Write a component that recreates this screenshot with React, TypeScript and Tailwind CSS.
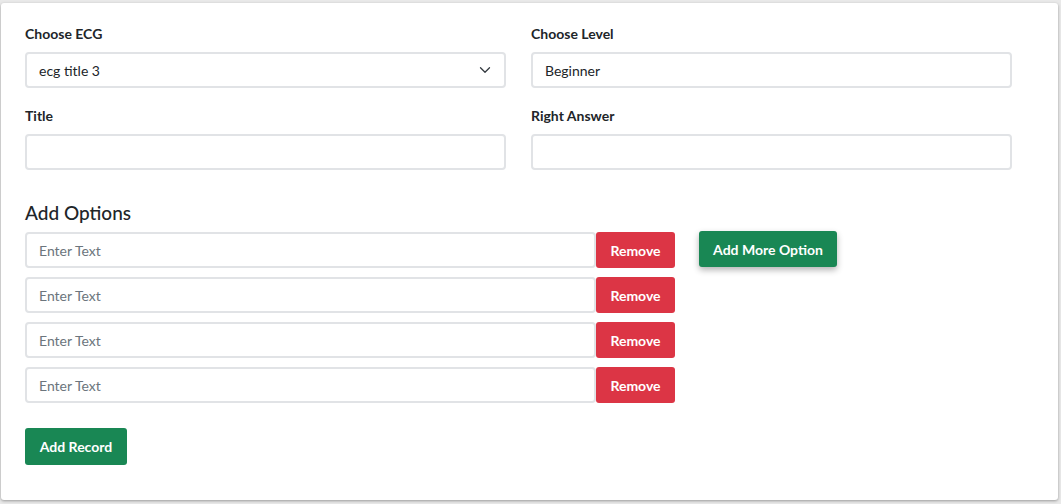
import { ChevronDown } from "lucide-react";

const inputCls =
  "h-9 rounded-[4px] border-2 border-[#e1e3e6] bg-white px-[12px] text-[14px] text-[#212529] outline-none placeholder:text-[#6c757d]";

function Field({ label, children }: { label: string; children: React.ReactNode }) {
  return (
    <div className="w-[481px]">
      <label className="mb-[10px] block text-[14px] font-bold leading-[17px] text-[#212529]">
        {label}
      </label>
      {children}
    </div>
  );
}

export default function App() {
  const options = [0, 1, 2, 3];

  return (
    <div
      className="min-h-[504px] bg-[#e9e9e9] pl-[1px] pr-[3px] pt-[3px] pb-[4px]"
      style={{ fontFamily: "Lato, 'Open Sans', sans-serif" }}
    >
      <div className="h-[497px] rounded-[3px] bg-white pl-[24px] pt-[22px] shadow-[0_1px_3px_rgba(0,0,0,0.35)]">
        {/* Top fields */}
        <div className="grid w-[987px] grid-cols-2 gap-x-[25px] gap-y-[19px]">
          <Field label="Choose ECG">
            <div className="relative">
              <select
                defaultValue="3"
                className={inputCls + " w-full appearance-none"}
              >
                <option value="1">ecg title 1</option>
                <option value="2">ecg title 2</option>
                <option value="3">ecg title 3</option>
              </select>
              <ChevronDown
                className="pointer-events-none absolute right-[12px] top-[9px] h-[18px] w-[18px] text-[#343a40]"
                strokeWidth={1.7}
              />
            </div>
          </Field>
          <Field label="Choose Level">
            <input className={inputCls + " w-full"} defaultValue="Beginner" />
          </Field>
          <Field label="Title">
            <input className={inputCls + " w-full"} />
          </Field>
          <Field label="Right Answer">
            <input className={inputCls + " w-full"} />
          </Field>
        </div>

        {/* Options */}
        <h2 className="mt-[32px] text-[19px] font-medium leading-[22px] text-[#212529]">
          Add Options
        </h2>
        <div className="mt-[8px] flex items-start">
          <div className="flex flex-col gap-[9px]">
            {options.map((i) => (
              <div key={i} className="flex">
                <input className={inputCls + " w-[571px]"} placeholder="Enter Text" />
                <button className="h-9 w-[79px] rounded-[3px] bg-[#dc3545] text-[14px] font-bold text-white">
                  Remove
                </button>
              </div>
            ))}
          </div>
          <button className="ml-[24px] mt-[-1px] h-9 w-[138px] rounded-[3px] bg-[#198754] text-[14px] font-bold text-white shadow-[0_3px_6px_rgba(0,0,0,0.3)]">
            Add More Option
          </button>
        </div>

        <button className="mt-[25px] h-[37px] w-[102px] rounded-[3px] bg-[#198754] text-[14px] font-bold text-white">
          Add Record
        </button>
      </div>
    </div>
  );
}
